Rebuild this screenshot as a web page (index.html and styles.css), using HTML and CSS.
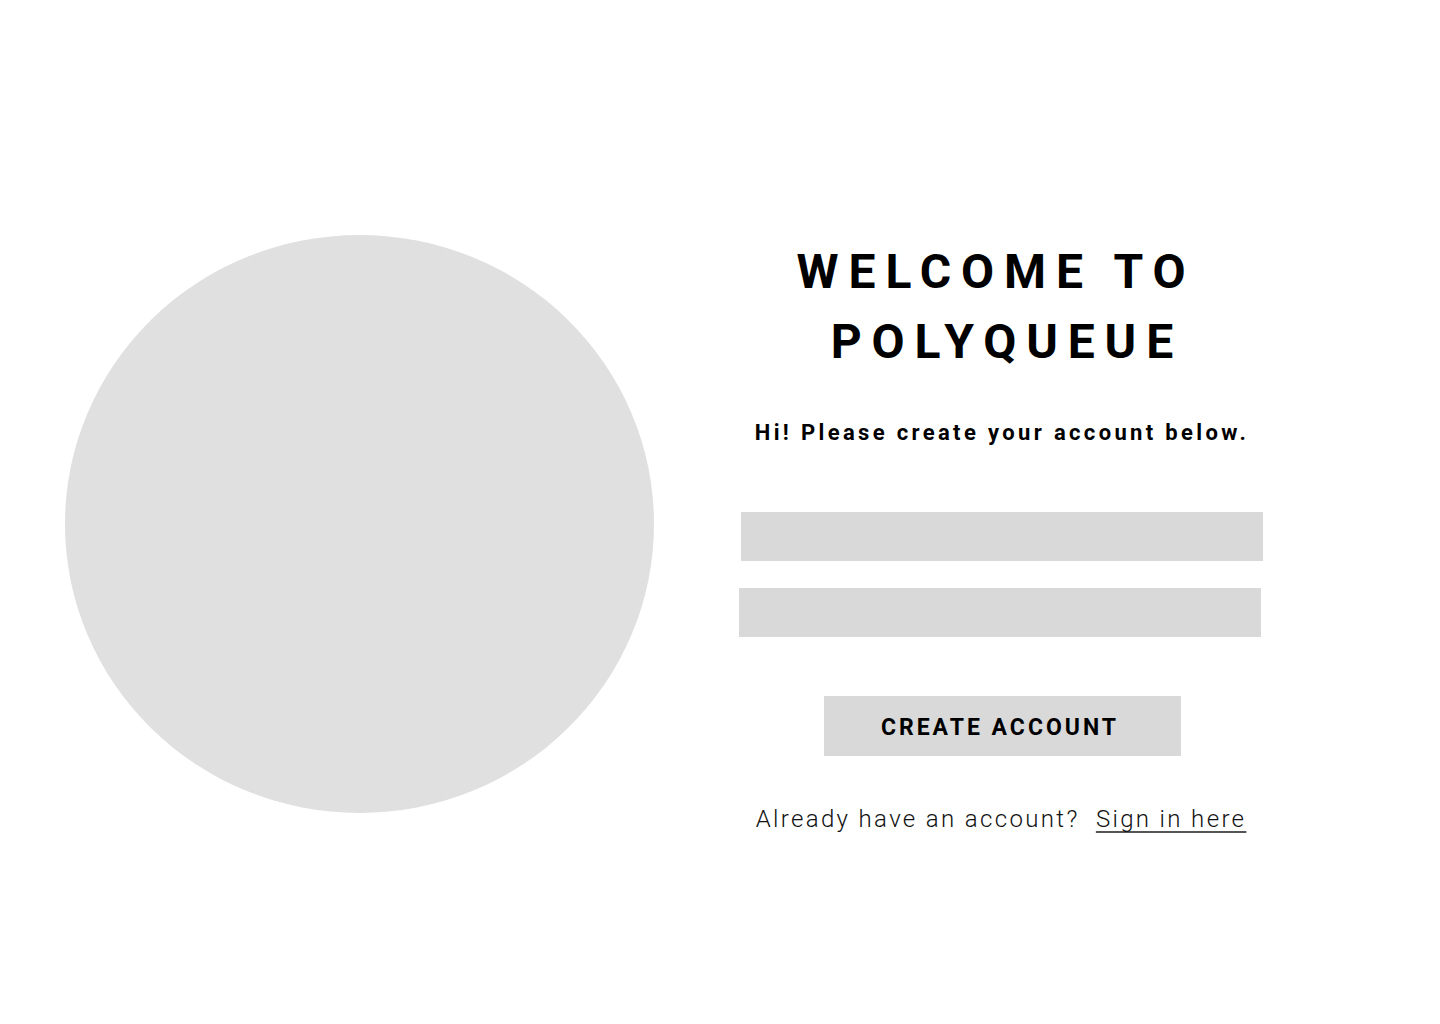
FILE: index.html
```html
<!DOCTYPE html>
<html lang="en">
<head>
<meta charset="utf-8">
<title>PolyQueue - Create Account</title>
<link rel="stylesheet" href="styles.css">
</head>
<body>
<main class="page">
  <div class="hero">
    <div class="blob"></div>
  </div>
  <section class="signup">
    <h1 class="title">WELCOME TO<br>&nbsp;POLYQUEUE</h1>
    <p class="subtitle">Hi! Please create your account below.</p>
    <form class="form">
      <input class="field" type="text" aria-label="Username">
      <input class="field field-second" type="password" aria-label="Password">
      <button class="submit" type="button">CREATE ACCOUNT</button>
    </form>
    <p class="signin">Already have an account? <a class="signin-link" href="#">Sign in here</a></p>
  </section>
</main>
</body>
</html>
```

FILE: styles.css
```css
* {
  box-sizing: border-box;
}

html, body {
  margin: 0;
  padding: 0;
  background: #ffffff;
}

body {
  font-family: Roboto, "Liberation Sans", Arial, sans-serif;
  color: #000000;
}

.page {
  display: flex;
  align-items: flex-start;
  width: 1440px;
  height: 1024px;
  padding: 235px 0 0 65px;
}

.hero {
  flex: 0 0 auto;
}

.blob {
  width: 589px;
  height: 578px;
  border-radius: 50%;
  background: #e0e0e0;
}

.signup {
  flex: 0 0 auto;
  width: 522px;
  margin-left: 87px;
  display: flex;
  flex-direction: column;
  align-items: center;
}

.title {
  margin: 2px 12px 0 0;
  font-size: 48px;
  line-height: 70px;
  font-weight: 700;
  letter-spacing: 9.9px;
  text-align: center;
}

.subtitle {
  margin: 43px 0 0;
  font-size: 22px;
  line-height: 26px;
  font-weight: 700;
  letter-spacing: 3.35px;
  text-align: center;
}

.form {
  margin-top: 66px;
  width: 100%;
  display: flex;
  flex-direction: column;
  align-items: center;
}

.field {
  display: block;
  width: 522px;
  height: 49px;
  border: none;
  background: #d9d9d9;
  padding: 0 16px;
  font: inherit;
  outline: none;
}

.field-second {
  margin: 27px 4px 0 0;
}

.submit {
  margin-top: 59px;
  width: 357px;
  height: 60px;
  border: none;
  background: #d9d9d9;
  font-family: Roboto, "Liberation Sans", Arial, sans-serif;
  font-size: 23px;
  font-weight: 700;
  letter-spacing: 3px;
  color: #000000;
  padding: 2px 4px 0 0;
  cursor: pointer;
}

.signin {
  margin: 49px 2px 0 0;
  font-size: 24px;
  line-height: 28px;
  font-weight: 300;
  letter-spacing: 2.35px;
  color: #111111;
  text-align: center;
}

.signin-link {
  margin-left: 8px;
  color: #111111;
  text-decoration: underline;
  text-decoration-color: #555555;
  text-decoration-skip-ink: none;
  text-underline-offset: 4px;
}
```
